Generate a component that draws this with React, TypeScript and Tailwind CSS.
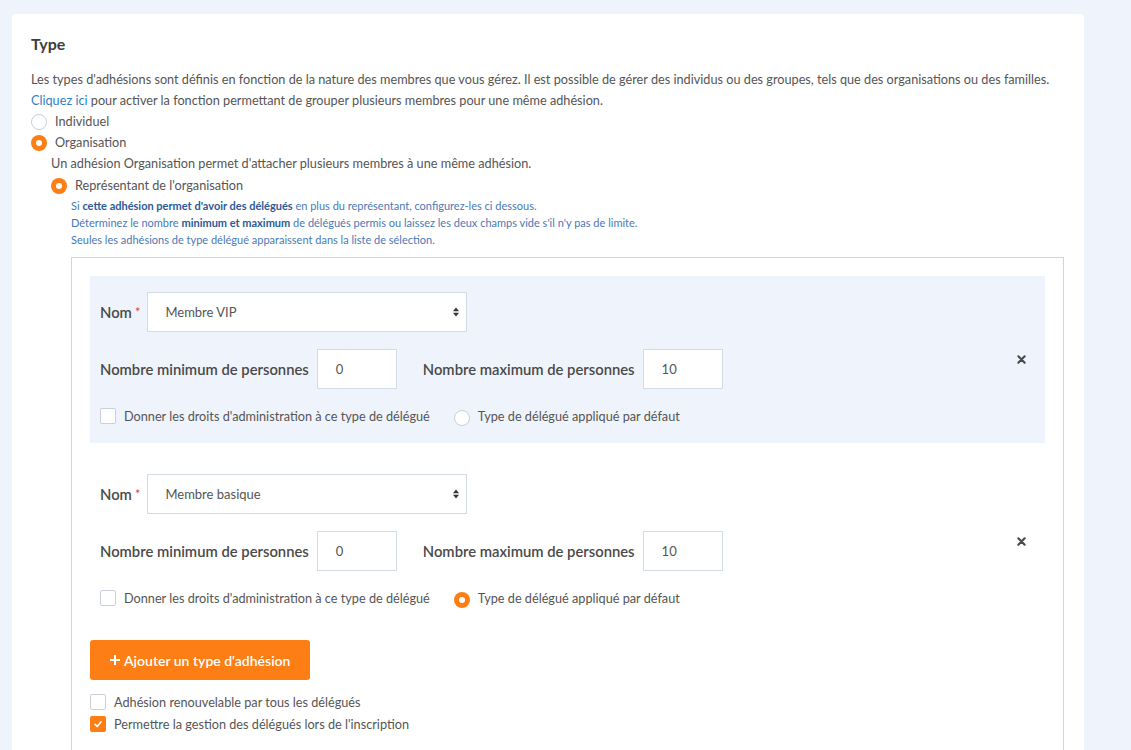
import React from "react";

const Radio: React.FC<{ checked?: boolean }> = ({ checked }) =>
  checked ? (
    <span className="flex size-4 shrink-0 items-center justify-center rounded-full bg-[#fd7e14]">
      <span className="size-1.5 rounded-full bg-white" />
    </span>
  ) : (
    <span className="block size-4 shrink-0 rounded-full border border-[#c9d0da] bg-white" />
  );

const Check: React.FC<{ checked?: boolean }> = ({ checked }) =>
  checked ? (
    <span className="flex size-4 shrink-0 items-center justify-center rounded-[2px] bg-[#fd7e14]">
      <svg viewBox="0 0 12 12" className="size-2.5" fill="none" stroke="white" strokeWidth="2" strokeLinecap="round" strokeLinejoin="round">
        <path d="M2.5 6.5 5 9 9.5 3.5" />
      </svg>
    </span>
  ) : (
    <span className="block size-4 shrink-0 rounded-[2px] border border-[#c9d0da] bg-white" />
  );

const SelectArrows = () => (
  <svg viewBox="0 0 8 12" className="h-[10px] w-[6px]" fill="#333">
    <path d="M4 0 8 5H0z" />
    <path d="M4 12 0 7h8z" />
  </svg>
);

const Delegate: React.FC<{ name: string; min: string; max: string; highlighted?: boolean; isDefault?: boolean }> = ({
  name,
  min,
  max,
  highlighted,
  isDefault,
}) => (
  <div className={`flex items-center pt-4 pb-[17px] pl-[10px] pr-[19px] ${highlighted ? "bg-[#eff4fc]" : ""}`}>
    <div className="flex flex-1 flex-col">
      <div className="flex items-center">
        <span className="text-[14.8px] font-semibold text-[#4a4a4a]">Nom</span>
        <span className="ml-[3px] text-[13px] text-[#e0443f]">*</span>
        <div className="ml-[7px] flex h-[40px] w-[320px] items-center justify-between border border-[#d3dbe6] bg-white pl-[17px] pr-[7px] text-[13px] text-[#555]">
          <span>{name}</span>
          <SelectArrows />
        </div>
      </div>
      <div className="mt-[17px] flex items-center">
        <span className="text-[14.8px] font-semibold text-[#4a4a4a]">Nombre minimum de personnes</span>
        <div className="ml-[8px] flex h-[40px] w-[80px] items-center border border-[#d3dbe6] bg-white pl-[18px] text-[13px] text-[#555]">
          {min}
        </div>
        <span className="ml-[26px] text-[14.8px] font-semibold text-[#4a4a4a]">Nombre maximum de personnes</span>
        <div className="ml-[8px] flex h-[40px] w-[80px] items-center border border-[#d3dbe6] bg-white pl-[18px] text-[13px] text-[#555]">
          {max}
        </div>
      </div>
      <div className="mt-[17px] flex h-[20px] items-center text-[12.7px] text-[#555]">
        <Check />
        <span className="ml-[8px]">Donner les droits d'administration à ce type de délégué</span>
        <span className="ml-[24px] mt-[4px] flex">
          <Radio checked={isDefault} />
        </span>
        <span className="ml-[8px]">Type de délégué appliqué par défaut</span>
      </div>
    </div>
    <svg viewBox="0 0 10 10" className="size-[9px]" fill="none" stroke="#4a4a4a" strokeWidth="2.4" strokeLinecap="round">
      <path d="M1.5 1.5 8.5 8.5M8.5 1.5 1.5 8.5" />
    </svg>
  </div>
);

export default function App() {
  return (
    <div className="h-[750px] overflow-hidden bg-[#eef3fc] pl-[12px] pr-[47px] pt-[14px]" style={{ fontFamily: "Lato, 'Noto Sans', sans-serif" }}>
      <div className="rounded-t-[4px] bg-white pl-[19px] pr-[20px] pt-[20px] pb-[20px]">
        <h2 className="text-[16px] font-bold leading-[20px] text-[#3d3d3d]">Type</h2>
        <div className="mt-[15px] text-[12.7px] leading-[21px] text-[#555]">
          <p>
            Les types d'adhésions sont définis en fonction de la nature des membres que vous gérez. Il est possible de gérer des
            individus ou des groupes, tels que des organisations ou des familles.
          </p>
          <p>
            <span className="text-[#2f7fc1]">Cliquez ici</span> pour activer la fonction permettant de grouper plusieurs membres pour
            une même adhésion.
          </p>
          <label className="flex h-[21px] items-center gap-2">
            <Radio />
            <span>Individuel</span>
          </label>
          <label className="flex h-[21px] items-center gap-2">
            <Radio checked />
            <span>Organisation</span>
          </label>
          <div className="pl-[20px]">
            <p>Un adhésion Organisation permet d'attacher plusieurs membres à une même adhésion.</p>
            <label className="mt-[1px] flex h-[21px] items-center gap-2">
              <Radio checked />
              <span>Représentant de l'organisation</span>
            </label>
            <div className="pl-[20px]">
              <div className="mt-[1px] text-[11px] leading-[17px] text-[#4a78b8]">
                <p>
                  Si <b className="text-[#2d5a96]">cette adhésion permet d'avoir des délégués</b> en plus du représentant, configurez-les
                  ci dessous.
                </p>
                <p>
                  Déterminez le nombre <b className="text-[#2d5a96]">minimum et maximum</b> de délégués permis ou laissez les deux champs
                  vide s'il n'y pas de limite.
                </p>
                <p>Seules les adhésions de type délégué apparaissent dans la liste de sélection.</p>
              </div>
              <div className="mt-[9px] border border-[#cbd6e4] px-[18px] pt-[18px] pb-[30px]">
                <Delegate name="Membre VIP" min="0" max="10" highlighted />
                <div className="mt-[15px]">
                  <Delegate name="Membre basique" min="0" max="10" isDefault />
                </div>
                <button className="mt-[15px] flex h-[40px] items-center gap-1 rounded-[3px] bg-[#fd7e14] px-[20px] text-[14px] font-semibold text-white">
                  <svg viewBox="0 0 10 10" className="size-[10px]" fill="white">
                    <path d="M4 0h2v4h4v2H6v4H4V6H0V4h4z" />
                  </svg>
                  Ajouter un type d'adhésion
                </button>
                <label className="mt-[12px] flex h-[20px] items-center gap-2">
                  <Check />
                  <span>Adhésion renouvelable par tous les délégués</span>
                </label>
                <label className="mt-[2px] flex h-[20px] items-center gap-2">
                  <Check checked />
                  <span>Permettre la gestion des délégués lors de l'inscription</span>
                </label>
              </div>
            </div>
          </div>
        </div>
      </div>
    </div>
  );
}
